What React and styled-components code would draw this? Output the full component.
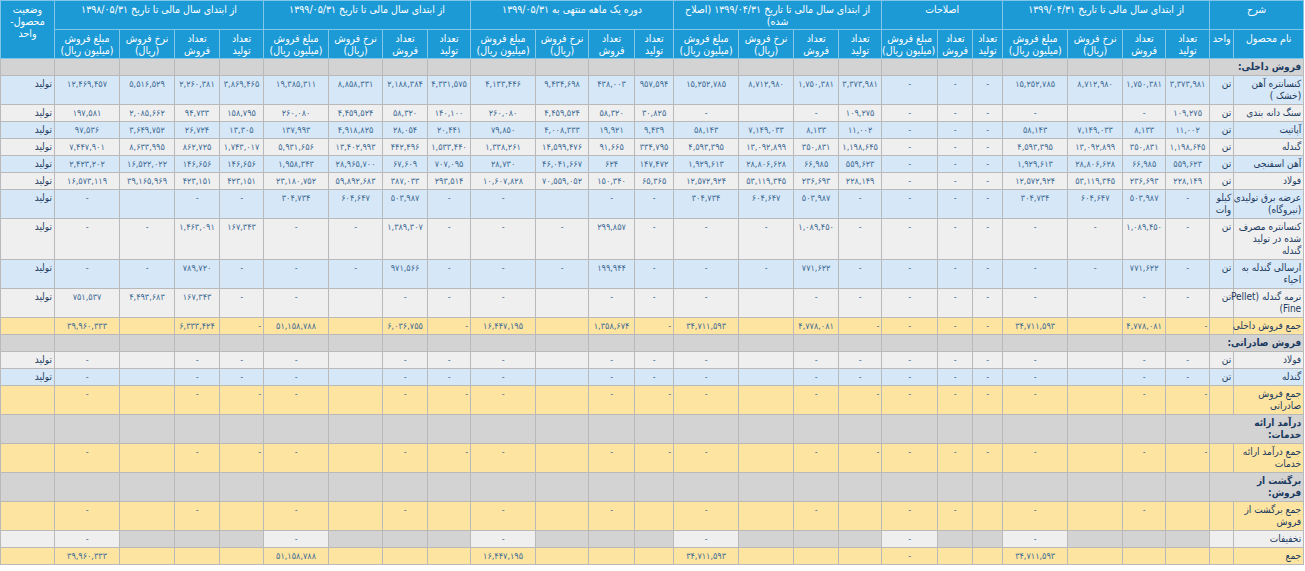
import React from 'react';
import styled, { createGlobalStyle } from 'styled-components';

const GlobalStyle = createGlobalStyle`
  html, body {
    margin: 0;
    padding: 0;
    background: #ffffff;
  }
  body {
    font-family: Tahoma, "DejaVu Sans Condensed", "DejaVu Sans", sans-serif;
  }
`;

// persian digits
const fa = (s) => s.replace(/\d/g, (d) => '۰۱۲۳۴۵۶۷۸۹'[d]);

const COLS = [70, 24, 44, 43, 55, 65, 30, 35, 56, 43, 45, 55, 65, 39, 46, 53, 65, 43, 45, 54, 65, 44, 45, 55, 65, 54];

const TONES = {
  blue: '#d6e7f7',
  light: '#efefef',
  sum: '#fee4a1',
  section: '#d3d3d3',
};

// index of "تعداد تولید" cells that sit at the start side in the sum rows
const START_ALIGNED = [0, 7, 11, 15, 19];

const GROUP_COLS = [
  ['تعداد', 'تولید'],
  ['تعداد', 'فروش'],
  ['نرخ فروش', '(ریال)'],
  ['مبلغ فروش', '(میلیون ریال)'],
];
const FIX_COLS = [
  ['تعداد', 'تولید'],
  ['تعداد', 'فروش'],
  ['مبلغ فروش', '(میلیون ریال)'],
];

// same pattern in the four-column periods, another one in the adjustments
const build = (four, three) => [...four, ...three, ...four, ...four, ...four, ...four];

const DASH_ROW = build(['-', '-', '', '-'], ['-', '-', '-']);
const RETURN_ROW = build(['', '-', '', '-'], ['', '-', '-']);
const DISCOUNT_ROW = build(['', '', '', '-'], ['', '', '-']);
const TOTAL_ROW = [
  '', '', '', '34,711,593',
  '', '', '-',
  '', '', '', '34,711,593',
  '', '', '', '16,447,195',
  '', '', '', '51,158,788',
  '', '', '', '39,960,333',
];

const ROWS = [
  { section: true, name: ['فروش داخلی:'] },
  {
    name: ['کنسانتره آهن', '(خشک )'], unit: ['تن'], tone: 'blue', status: 'تولید',
    cells: '3,373,981|1,750,381|8,712,980|15,252,785|-|-|-|3,373,981|1,750,381|8,712,980|15,252,785|957,594|438,003|9,434,698|4,133,446|4,331,575|2,188,384|8,858,331|19,385,311|3,869,465|2,260,381|5,516,529|12,469,457',
  },
  {
    name: ['سنگ دانه بندی'], unit: ['تن'], tone: 'light', status: 'تولید',
    cells: '109,275|-||-|-|-|-|109,275|-||-|30,825|58,320|4,459,524|260,080|140,100|58,320|4,459,524|260,080|158,795|94,733|2,085,662|197,581',
  },
  {
    name: ['آپاتیت'], unit: ['تن'], tone: 'blue', status: 'تولید',
    cells: '11,002|8,133|7,149,033|58,143|-|-|-|11,002|8,133|7,149,033|58,143|9,439|19,921|4,008,333|79,850|20,441|28,054|4,918,825|137,993|13,305|26,724|3,649,752|97,536',
  },
  {
    name: ['گندله'], unit: ['تن'], tone: 'light', status: 'تولید',
    cells: '1,198,645|350,831|13,092,899|4,593,395|-|-|-|1,198,645|350,831|13,092,899|4,593,395|334,795|91,665|14,599,476|1,338,261|1,533,440|442,496|13,402,993|5,931,656|1,743,017|862,725|8,633,995|7,447,901',
  },
  {
    name: ['آهن اسفنجی'], unit: ['تن'], tone: 'blue', status: 'تولید',
    cells: '559,623|66,985|28,806,628|1,929,613|-|-|-|559,623|66,985|28,806,628|1,929,613|147,472|624|46,041,667|28,730|707,095|67,609|28,965,700|1,958,343|146,656|146,656|16,522,022|2,423,202',
  },
  {
    name: ['فولاد'], unit: ['تن'], tone: 'light', status: 'تولید',
    cells: '228,149|236,693|53,119,345|12,572,924|-|-|-|228,149|236,693|53,119,345|12,572,924|65,365|150,340|70,559,052|10,607,828|293,514|387,033|59,892,683|23,180,752|423,151|423,151|39,165,969|16,573,119',
  },
  {
    name: ['عرضه برق تولیدی', '(نیروگاه)'], unit: ['کیلو', 'وات'], tone: 'blue', status: 'تولید',
    cells: '-|503,987|604,647|304,734|-|-|-|-|503,987|604,647|304,734|-|-||-|-|503,987|604,647|304,734|-|-||-',
  },
  {
    name: ['کنسانتره مصرف', 'شده در تولید', 'گندله'], unit: ['تن'], tone: 'light', status: 'تولید',
    cells: '-|1,089,450|-|-|-|-|-|-|1,089,450|-|-|-|299,857|-|-|-|1,389,307|-|-|167,343|1,463,091|-|-',
  },
  {
    name: ['ارسالی گندله به', 'احیاء'], unit: ['تن'], tone: 'blue', status: 'تولید',
    cells: '-|771,622|-|-|-|-|-|-|771,622|-|-|-|199,944|-|-|-|971,566|-|-|-|789,720|-|-',
  },
  {
    name: ['نرمه گندله (Pellet', 'Fine)'], unit: ['تن'], tone: 'light', status: 'تولید',
    cells: '-|-||-|-|-|-|-|-||-|-|-||-|-|-||-|-|167,343|4,493,683|751,537',
  },
  {
    name: ['جمع فروش داخلی'], tone: 'sum',
    cells: '-|4,778,081||34,711,593|-|-|-|-|4,778,081||34,711,593|-|1,358,674||16,447,195|-|6,036,755||51,158,788|-|6,333,424||39,960,333',
  },
  { section: true, name: ['فروش صادراتی:'] },
  { name: ['فولاد'], unit: ['تن'], tone: 'light', status: 'تولید', cells: DASH_ROW },
  { name: ['گندله'], unit: ['تن'], tone: 'blue', status: 'تولید', cells: DASH_ROW },
  { name: ['جمع فروش', 'صادراتی'], tone: 'sum', cells: DASH_ROW },
  { section: true, name: ['درآمد ارائه', 'خدمات:'] },
  { name: ['جمع درآمد ارائه', 'خدمات'], tone: 'sum', cells: DASH_ROW },
  { section: true, name: ['برگشت از', 'فروش:'] },
  { name: ['جمع برگشت از', 'فروش'], tone: 'sum', cells: RETURN_ROW },
  { name: ['تخفیفات'], tone: 'light', discount: true, cells: DISCOUNT_ROW },
  { name: ['جمع'], tone: 'sum', cells: TOTAL_ROW },
];

const Lines = ({ lines }) =>
  lines.map((l, i) => (
    <React.Fragment key={i}>
      {i > 0 && <br />}
      {l}
    </React.Fragment>
  ));

export default function App() {
  return (
    <>
      <GlobalStyle />
      <Page>
        <Table>
          <colgroup>
            {COLS.map((w, i) => (
              <col key={i} style={{ width: w }} />
            ))}
          </colgroup>
          <thead>
            <tr>
              <HeadCell colSpan={2}>شرح</HeadCell>
              <HeadCell colSpan={4}>از ابتدای سال مالی تا تاریخ ۱۳۹۹/۰۴/۳۱</HeadCell>
              <HeadCell colSpan={3}>اصلاحات</HeadCell>
              <HeadCell colSpan={4}>
                از ابتدای سال مالی تا تاریخ ۱۳۹۹/۰۴/۳۱ (اصلاح
                <br />
                شده)
              </HeadCell>
              <HeadCell colSpan={4}>دوره یک ماهه منتهی به ۱۳۹۹/۰۵/۳۱</HeadCell>
              <HeadCell colSpan={4}>از ابتدای سال مالی تا تاریخ ۱۳۹۹/۰۵/۳۱</HeadCell>
              <HeadCell colSpan={4}>از ابتدای سال مالی تا تاریخ ۱۳۹۸/۰۵/۳۱</HeadCell>
              <HeadCell rowSpan={2}>
                <Lines lines={['وضعیت', 'محصول-', 'واحد']} />
              </HeadCell>
            </tr>
            <tr>
              <HeadCell>نام محصول</HeadCell>
              <HeadCell>واحد</HeadCell>
              {[GROUP_COLS, FIX_COLS, GROUP_COLS, GROUP_COLS, GROUP_COLS, GROUP_COLS].flatMap((group, g) =>
                group.map((lines, i) => (
                  <HeadCell key={`${g}-${i}`}>
                    <Lines lines={lines} />
                  </HeadCell>
                ))
              )}
            </tr>
          </thead>
          <tbody>
            {ROWS.map((row, r) => {
              if (row.section) {
                return (
                  <tr key={r}>
                    <NameCell colSpan={2} $tone="section" $bold>
                      <Lines lines={row.name} />
                    </NameCell>
                    {Array.from({ length: 24 }).map((_, i) => (
                      <Cell key={i} $tone="section" />
                    ))}
                  </tr>
                );
              }
              const cells = Array.isArray(row.cells) ? row.cells : row.cells.split('|');
              return (
                <tr key={r}>
                  <NameCell $tone={row.tone}>
                    <Lines lines={row.name} />
                  </NameCell>
                  <TextCell $tone={row.tone}>{row.unit && <Lines lines={row.unit} />}</TextCell>
                  {cells.map((v, i) => (
                    <Cell
                      key={i}
                      $tone={row.discount ? (v ? 'light' : 'section') : row.tone}
                      $align={row.tone === 'sum' && START_ALIGNED.includes(i) ? 'right' : 'center'}
                    >
                      {fa(v)}
                    </Cell>
                  ))}
                  <TextCell $tone={row.tone}>{row.status}</TextCell>
                </tr>
              );
            })}
          </tbody>
        </Table>
      </Page>
    </>
  );
}

// STYLES

const Page = styled.div`
  width: 1305px;
  overflow: hidden;
  background: #ffffff;
`;

const Table = styled.table`
  direction: rtl;
  border-collapse: collapse;
  table-layout: fixed;
  width: 1304px;
  font-family: Tahoma, "DejaVu Sans Condensed", "DejaVu Sans", sans-serif;
  font-stretch: condensed;
  font-size: 10px;
`;

const HeadCell = styled.th`
  background: #1c9ad6;
  color: #ffffff;
  font-weight: normal;
  font-size: 10.5px;
  border: 1px solid #82c7ea;
  padding: 2px 2px;
  line-height: 12px;
  vertical-align: top;
  text-align: center;
  white-space: nowrap;
  overflow: hidden;
`;

const Cell = styled.td`
  background: ${(p) => TONES[p.$tone]};
  border: 1px solid #b9b9b9;
  padding: 2px 2px;
  line-height: 12px;
  height: 12px;
  vertical-align: top;
  text-align: ${(p) => p.$align || 'center'};
  color: #3f6c95;
  font-size: 9px;
  letter-spacing: -0.2px;
  white-space: nowrap;
  overflow: hidden;
`;

const TextCell = styled(Cell)`
  text-align: right;
  color: #1b3a60;
  font-size: 10px;
  letter-spacing: 0;
`;

const NameCell = styled(TextCell)`
  font-weight: ${(p) => (p.$bold ? 'bold' : 'normal')};
  overflow: visible;
`;
